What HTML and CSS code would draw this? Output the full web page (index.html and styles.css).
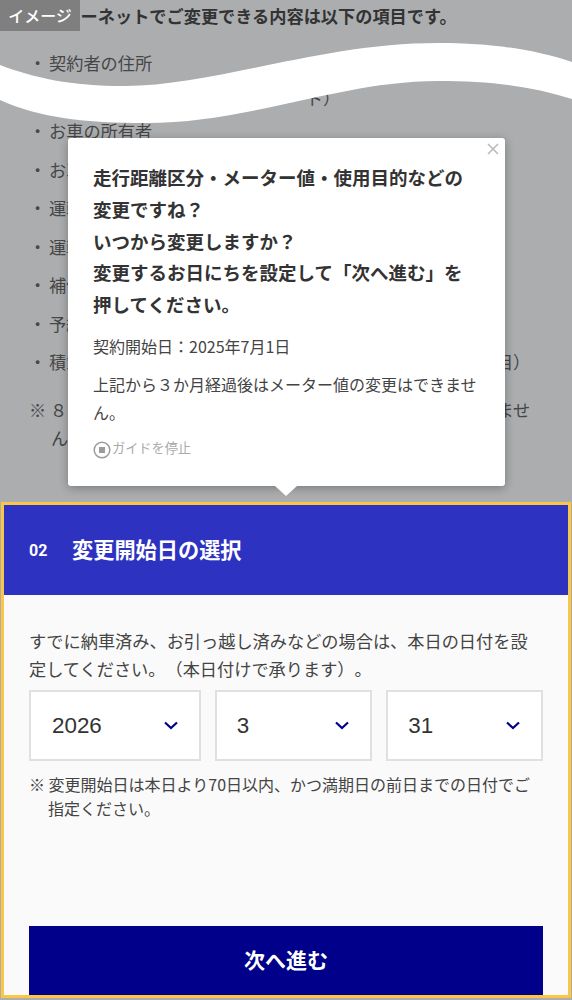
FILE: index.html
```html
<!DOCTYPE html>
<html lang="ja">
<head>
  <meta charset="UTF-8" />
  <meta name="viewport" content="width=device-width, initial-scale=1.0"/>
  <title>変更開始日の選択</title>
  <link rel="stylesheet" href="styles.css">
</head>
<body>

  <div class="image-tag">イメージ</div>

  <svg class="wave" viewBox="0 0 572 90" preserveAspectRatio="none" aria-hidden="true">
    <path d="M0 23 C35 36 70 44 125 44 C215 44 320 1 438 1 C495 1 535 8 572 20 L572 57 C530 44 490 39 438 39 C340 39 250 81 146 81 C85 81 40 76 0 58 Z" />
  </svg>

  <section class="back">
    <p class="back-lead">インターネットでご変更できる内容は以下の項目です。</p>
    <ul class="back-list">
      <li>契約者の住所</li>
      <li class="short">お車の登録番号（ナンバープレート）</li>
      <li>お車の所有者</li>
      <li>お車の使用者</li>
      <li>運転者の範囲</li>
      <li>運転者の年齢条件</li>
      <li>補償内容</li>
      <li>予約内容</li>
      <li>積載状態・走行距離区分・メーター値・使用目的（一部項目）</li>
    </ul>
    <p class="back-note">※ ８日以内に満期日を迎えるご契約はこの画面では変更できません。</p>
  </section>

  <div class="guide">
    <button class="guide-close" aria-label="閉じる">
      <svg viewBox="0 0 12 12" width="12" height="12"><path d="M1 1 L11 11 M11 1 L1 11" /></svg>
    </button>
    <p class="guide-title">走行距離区分・メーター値・使用目的などの変更ですね？<br>いつから変更しますか？<br>変更するお日にちを設定して「次へ進む」を押してください。</p>
    <p class="guide-date">契約開始日：2025年7月1日</p>
    <p class="guide-text">上記から３か月経過後はメーター値の変更はできません。</p>
    <div class="guide-stop">
      <svg viewBox="0 0 18 18" width="18" height="18"><circle cx="9" cy="9" r="7.8" /><rect x="6" y="6" width="6" height="6" /></svg>
      <span>ガイドを停止</span>
    </div>
  </div>

  <section class="step">
    <h2 class="step-head"><span class="step-no">02</span>変更開始日の選択</h2>
    <div class="step-body">
      <p class="step-text">すでに納車済み、お引っ越し済みなどの場合は、本日の日付を設定してください。（本日付けで承ります）。</p>
      <div class="selects">
        <div class="select year">2026<svg viewBox="0 0 14 9" width="14" height="9"><path d="M1 1.5 L7 7 L13 1.5" /></svg></div>
        <div class="select month">3<svg viewBox="0 0 14 9" width="14" height="9"><path d="M1 1.5 L7 7 L13 1.5" /></svg></div>
        <div class="select day">31<svg viewBox="0 0 14 9" width="14" height="9"><path d="M1 1.5 L7 7 L13 1.5" /></svg></div>
      </div>
      <p class="step-note">※ <span>変更開始日は本日より70日以内、かつ満期日の前日までの日付でご指定ください。</span></p>
      <button class="next">次へ進む</button>
    </div>
  </section>

</body>
</html>
```

FILE: styles.css
```css
* {
  box-sizing: border-box;
}

html, body {
  height: 1000px;
}

body {
  margin: 0;
  position: relative;
  overflow: hidden;
  background: #acadaf;
  color: #333;
  font-family: "Noto Sans CJK JP", "Liberation Sans", sans-serif;
  font-size: 16px;
  text-spacing-trim: space-all;
}

p {
  margin: 0;
}

.image-tag {
  position: absolute;
  top: 0;
  left: 0;
  z-index: 5;
  width: 80px;
  height: 31px;
  background: #7f7f7f;
  color: #fff;
  font-size: 16px;
  font-weight: 500;
  line-height: 30px;
  text-align: center;
}

.wave {
  position: absolute;
  top: 42px;
  left: 0;
  z-index: 2;
  width: 572px;
  height: 90px;
}

.wave path {
  fill: #fff;
}

.back {
  height: 502px;
  padding: 4px 30px 0 29px;
  color: #454647;
  font-size: 17.2px;
}

.back-lead {
  font-weight: 700;
  line-height: 24px;
  color: #333;
}

.back-list {
  list-style: none;
  margin: 23px 0 0;
  padding: 0;
}

.back-list li {
  height: 38.5px;
  padding-left: 20px;
  line-height: 24px;
  position: relative;
}

.back-list li::before {
  content: "・";
  position: absolute;
  left: 0;
}

.back-list li.short {
  height: 29.5px;
  line-height: 16px;
}

.back-note {
  margin-top: 7px;
  padding-left: 22px;
  text-indent: -22px;
  line-height: 28px;
}

.guide {
  position: absolute;
  top: 138px;
  left: 68px;
  z-index: 3;
  width: 437px;
  height: 348px;
  padding: 24px 25px 0;
  background: #fff;
  border-radius: 3px;
  box-shadow: 0 2px 10px rgba(0, 0, 0, 0.3);
}

.guide::after {
  content: "";
  position: absolute;
  left: 207px;
  bottom: -10px;
  border-left: 11px solid transparent;
  border-right: 11px solid transparent;
  border-top: 10px solid #fff;
}

.guide-close {
  position: absolute;
  top: 5px;
  right: 6px;
  padding: 0;
  border: none;
  background: none;
  line-height: 0;
}

.guide-close path {
  stroke: #b8b8b8;
  stroke-width: 1.5;
  fill: none;
}

.guide-title {
  font-size: 18.5px;
  font-weight: 700;
  line-height: 31.8px;
}

.guide-date {
  margin-top: 11px;
  font-size: 16px;
  line-height: 28px;
  color: #444;
}

.guide-text {
  margin-top: 10px;
  line-height: 28px;
  color: #444;
}

.guide-stop {
  display: flex;
  align-items: center;
  margin-top: 10px;
  font-size: 13.2px;
  color: #aaa;
}

.guide-stop svg {
  margin-right: 1px;
  margin-top: 5px;
}

.guide-stop circle {
  fill: none;
  stroke: #9b9b9b;
  stroke-width: 1.5;
}

.guide-stop rect {
  fill: #9b9b9b;
}

.step {
  height: 496px;
  margin: 0 1px;
  background: #fafafa;
  border: 3px solid #fbc545;
}

.step-head {
  display: flex;
  align-items: center;
  height: 90px;
  margin: 0;
  padding: 0 0 3px 25px;
  background: #2e32c0;
  color: #fff;
  font-size: 21.2px;
  font-weight: 700;
}

.step-no {
  width: 43px;
  margin-top: 3px;
  font-family: "Roboto", "Liberation Sans", sans-serif;
  font-size: 16px;
}

.step-body {
  padding: 32px 25px 0;
}

.step-text {
  font-size: 17.2px;
  line-height: 28px;
  color: #444;
}

.selects {
  display: flex;
  gap: 14px;
  margin-top: 7px;
}

.select {
  display: flex;
  align-items: center;
  justify-content: space-between;
  height: 71px;
  padding: 0 21px 0 20px;
  background: #fff;
  border: 2px solid #e0e0e0;
  font-family: "Liberation Sans", sans-serif;
  font-size: 22.4px;
  color: #333;
}

.select.year {
  width: 172px;
  padding-left: 21px;
}

.select.month {
  width: 158px;
}

.select.day {
  width: 157px;
}

.select svg path {
  fill: none;
  stroke: #00008b;
  stroke-width: 2.2;
}

.step-note {
  margin-top: 11px;
  padding-left: 19px;
  text-indent: -19px;
  line-height: 24px;
  color: #444;
}

.next {
  display: block;
  width: 514px;
  height: 69px;
  margin-top: 106px;
  padding: 0 0 3px;
  border: none;
  background: #00008b;
  color: #fff;
  font-family: inherit;
  font-size: 21px;
  font-weight: 700;
}
```
